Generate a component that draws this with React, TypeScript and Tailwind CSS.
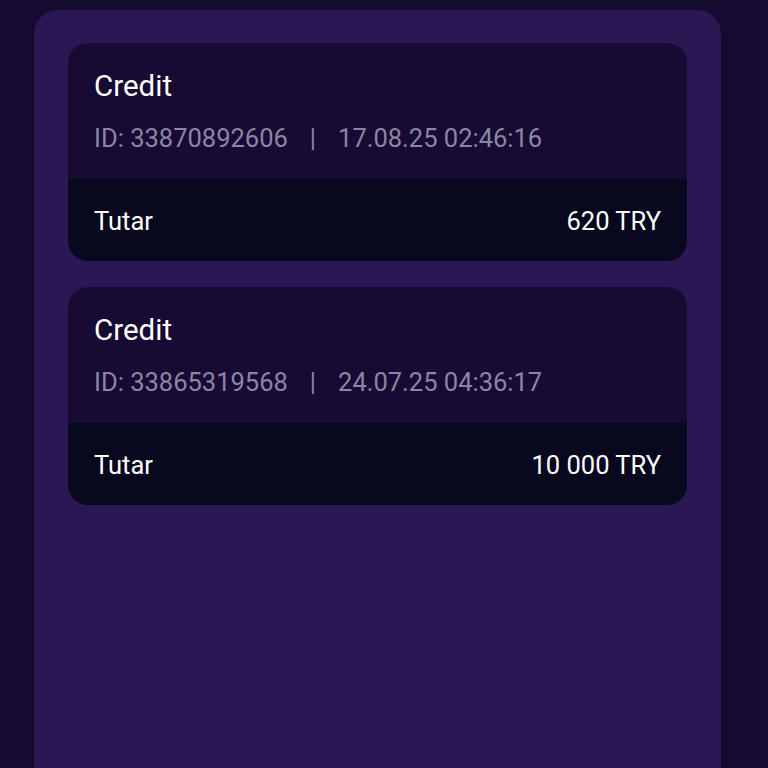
import React from 'react';

const items = [
    { id: '33870892606', date: '17.08.25 02:46:16', amount: '620 TRY' },
    { id: '33865319568', date: '24.07.25 04:36:17', amount: '10 000 TRY' },
];

export default function App() {
    return (
        <main className="min-h-[768px] bg-[#150b30] pl-[34px] pr-[47px] pt-[10px] font-['Roboto',sans-serif]">
            <div className="min-h-[758px] rounded-t-[24px] bg-[#2a1753] px-[34px] pt-[33px] flex flex-col gap-[26px]">
                {items.map(item => (
                    <div key={item.id} className="rounded-[20px] overflow-hidden">
                        <div className="bg-[#170b33] h-[136px] px-[26px] pt-[26px]">
                            <p className="text-[29.5px] leading-[34px] text-white">Credit</p>
                            <p className="mt-[19px] text-[25.5px] leading-[32px] text-[#8c85a3]">
                                ID: {item.id}
                                <span className="mx-[22px]">|</span>
                                {item.date}
                            </p>
                        </div>
                        <div className="bg-[#08081f] h-[82px] px-[26px] pt-[2px] flex items-center justify-between text-[25.5px] text-white">
                            <span>Tutar</span>
                            <span>{item.amount}</span>
                        </div>
                    </div>
                ))}
            </div>
        </main>
    );
}
